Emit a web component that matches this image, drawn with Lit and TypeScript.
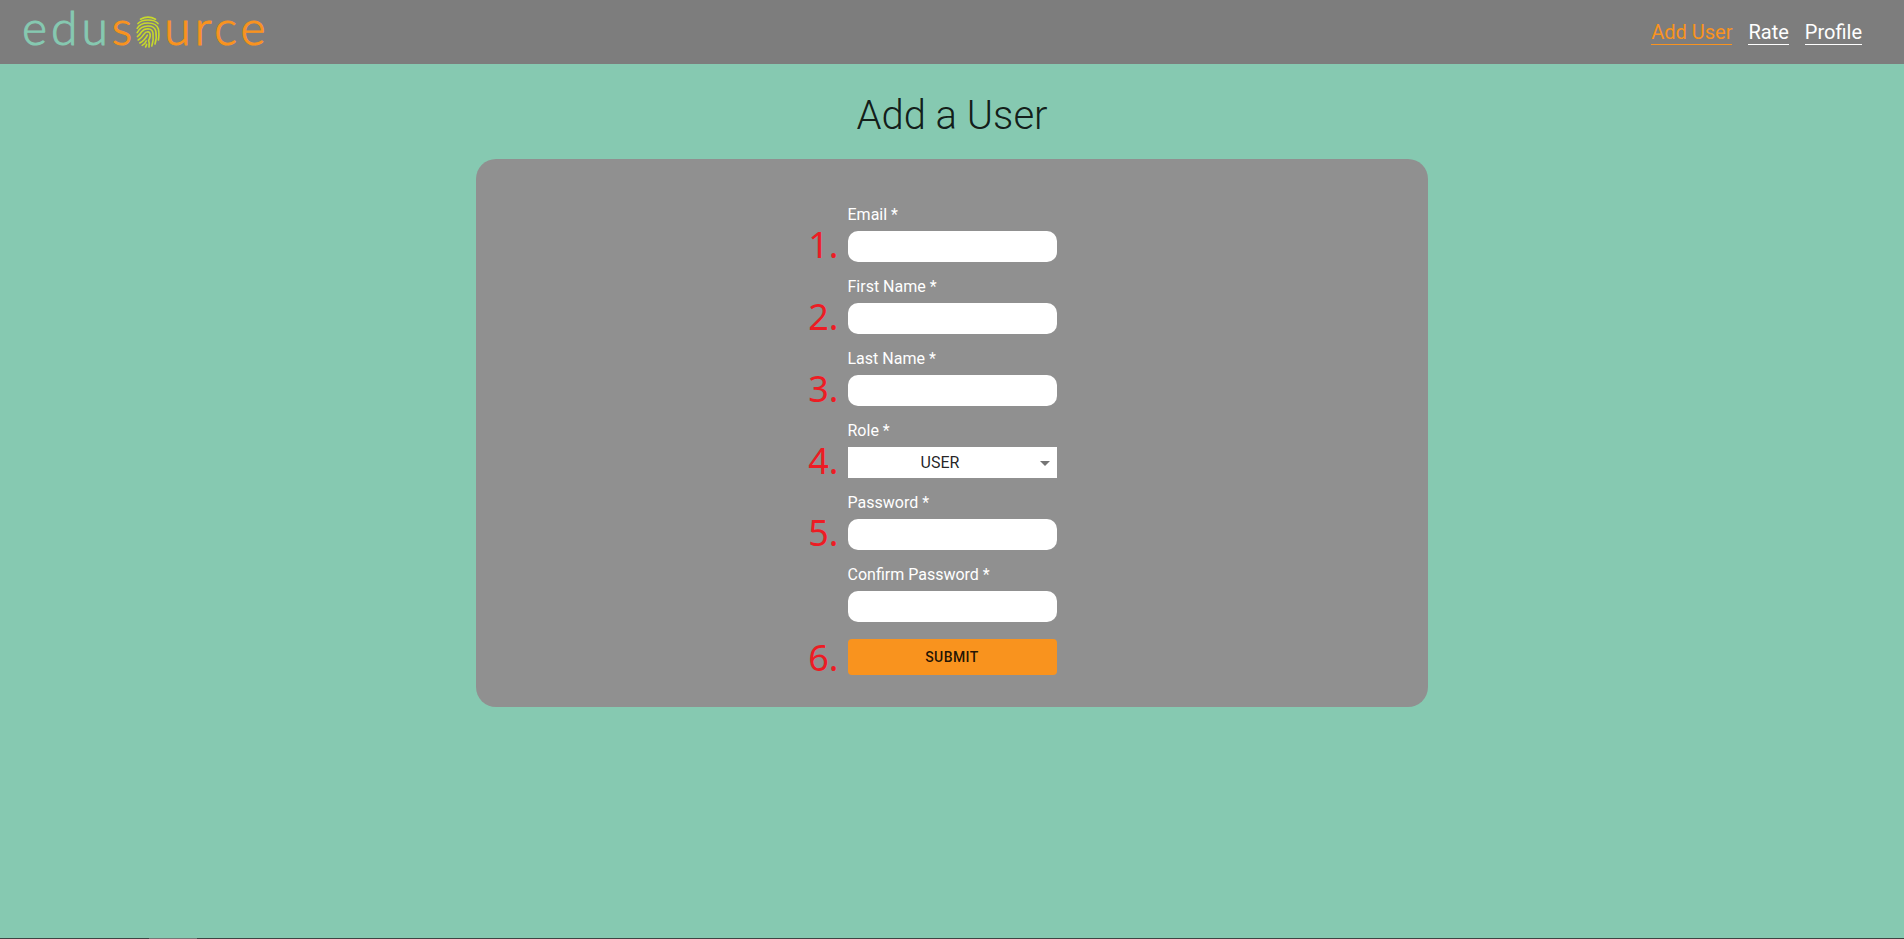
import { LitElement, html, css, svg } from "lit";
import { customElement } from "lit/decorators.js";

const RIDGES = [
  "M4.5 3.2 Q12 -1 19.5 3.2",
  "M2 7.6 Q5 4 12 4 Q19 4 22 7.6",
  "M1.2 12.4 Q4 7 12 7 Q20.5 7 22.4 13 Q23.4 18 22.4 24",
  "M1.2 16.6 Q4.5 10 12 10 Q18.6 10 19.8 15 Q21 22 19 28",
  "M1.4 20.6 Q4 18.4 5.4 16 Q8 12.8 12 12.8 Q16.4 13 17 17.4 Q17.8 24 15.8 30",
  "M2.2 24 Q5.6 22 7.6 18.6 Q9.4 15.8 12 15.8 Q14.6 16.4 14.2 20 Q13.8 22.4 12.6 24.4 Q13.8 27 13 31",
  "M3.8 27 Q8.6 24.6 11.4 19.2",
  "M6.2 29.4 Q9.4 27.6 10.2 25",
  "M9.6 31 Q10.4 29.6 10.6 28.4",
];

@customElement("brand-logo")
export class BrandLogo extends LitElement {
  static styles = css`
    :host {
      display: block;
    }
    .logo {
      display: flex;
      align-items: center;
      color: #86c9b1;
      font: 300 48px/48px Lato, sans-serif;
      letter-spacing: 4px;
      text-decoration: none;
      -webkit-text-stroke: 1px currentColor;
    }
    .word {
      padding-bottom: 10px;
    }
    .warm {
      color: #f9931e;
    }
    .print {
      width: 24px;
      height: 32px;
      margin-right: 4px;
      fill: none;
      stroke: #c8d92b;
      stroke-width: 1.6;
      stroke-linecap: round;
    }
  `;

  render() {
    return html`<a class="logo" href="#" aria-label="edusource">
      <span class="word">edu</span><span class="word warm">s</span>
      <svg class="print" viewBox="0 0 24 32" aria-hidden="true">
        ${RIDGES.map((d) => svg`<path d=${d} />`)}
      </svg>
      <span class="word warm">urce</span>
    </a>`;
  }
}

interface Field {
  id: string;
  label: string;
  type: "text" | "email" | "password" | "select";
  step?: number;
}

const FIELDS: Field[] = [
  { id: "email", label: "Email", type: "email", step: 1 },
  { id: "first", label: "First Name", type: "text", step: 2 },
  { id: "last", label: "Last Name", type: "text", step: 3 },
  { id: "role", label: "Role", type: "select", step: 4 },
  { id: "password", label: "Password", type: "password", step: 5 },
  { id: "confirm", label: "Confirm Password", type: "password" },
];

@customElement("app-root")
export class AppRoot extends LitElement {
  static styles = css`
    :host {
      display: flex;
      flex-direction: column;
      min-height: 100vh;
      background: #86c9b1;
      color: rgba(0, 0, 0, 0.87);
      font-family: Roboto, sans-serif;
    }
    * {
      box-sizing: border-box;
    }
    .bar {
      display: flex;
      align-items: center;
      justify-content: space-between;
      height: 64px;
      padding: 0 42px 0 22px;
      background: #7d7d7d;
    }
    .nav {
      display: flex;
      gap: 16px;
    }
    .link {
      color: #fff;
      border-bottom: 1px solid;
      font-size: 20px;
      line-height: 24px;
      text-decoration: none;
    }
    .active {
      color: #f9931e;
    }
    .main {
      flex: 1;
      display: flex;
      flex-direction: column;
      align-items: center;
    }
    .title {
      margin: 28px 0 19px;
      font-size: 40px;
      font-weight: 300;
      line-height: 48px;
    }
    .card {
      display: flex;
      justify-content: center;
      width: 50%;
      padding: 48px 0 32px;
      border-radius: 20px;
      background: #909090;
    }
    .form {
      display: grid;
      gap: 17px;
      width: 209px;
    }
    .field {
      display: grid;
      gap: 8px;
    }
    .label {
      color: #fff;
      font-size: 16px;
      line-height: 16px;
    }
    .control {
      position: relative;
      display: grid;
    }
    .input,
    .select {
      width: 100%;
      height: 31px;
      border: 0;
      background: #fff;
      color: inherit;
      font: 16px Roboto, sans-serif;
    }
    .input {
      padding: 0 10px;
      border-radius: 10px;
    }
    .select {
      appearance: none;
      padding: 0 24px 0 0;
      border-radius: 0;
      text-align: center;
      text-align-last: center;
    }
    .arrow {
      position: absolute;
      top: 4px;
      right: 0;
      width: 24px;
      height: 24px;
      fill: #757575;
      pointer-events: none;
    }
    .step {
      position: absolute;
      right: 100%;
      bottom: -7px;
      margin-right: 9px;
      color: #ed1c24;
      font: 36px/48px "Noto Sans", "Open Sans", sans-serif;
    }
    .submit {
      height: 36px;
      border: 0;
      border-radius: 4px;
      background: #f9931e;
      color: inherit;
      font: 500 14px Roboto, sans-serif;
      letter-spacing: 0.03em;
    }
    .edge {
      height: 1px;
      padding-left: 149px;
      background: #3f4443;
    }
    .thumb {
      width: 48px;
      height: 1px;
      background: #777;
    }
  `;

  private control(f: Field) {
    return f.type === "select"
      ? html`<select class="select" id=${f.id} required>
            <option>USER</option>
            <option>ADMIN</option>
          </select>
          <svg class="arrow" viewBox="0 0 24 24" aria-hidden="true">
            <path d="M7 10l5 5 5-5z" />
          </svg>`
      : html`<input class="input" id=${f.id} type=${f.type} required />`;
  }

  private step(n?: number) {
    return n ? html`<span class="step">${n}.</span>` : null;
  }

  render() {
    return html`
      <header class="bar">
        <brand-logo></brand-logo>
        <nav class="nav">
          <a class="link active" href="#add">Add User</a>
          <a class="link" href="#rate">Rate</a>
          <a class="link" href="#profile">Profile</a>
        </nav>
      </header>
      <main class="main">
        <h1 class="title">Add a User</h1>
        <section class="card">
          <form class="form">
            ${FIELDS.map(
              (f) => html`<div class="field">
                <label class="label" for=${f.id}>${f.label} *</label>
                <div class="control">${this.control(f)}${this.step(f.step)}</div>
              </div>`
            )}
            <div class="control">
              <button class="submit" type="submit">SUBMIT</button>
              ${this.step(6)}
            </div>
          </form>
        </section>
      </main>
      <div class="edge"><div class="thumb"></div></div>
    `;
  }
}
